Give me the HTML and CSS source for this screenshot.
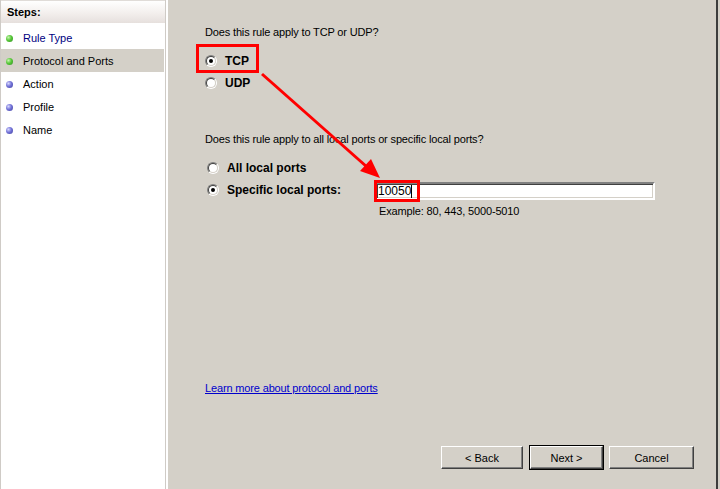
FILE: index.html
```html
<!DOCTYPE html>
<html>
<head>
<meta charset="utf-8">
<link rel="stylesheet" href="styles.css">
</head>
<body>
<div class="window">
  <aside class="steps">
    <div class="steps-head">Steps:</div>
    <ul class="step-list">
      <li class="step done link"><span class="dot green"></span>Rule Type</li>
      <li class="step done current"><span class="dot green"></span>Protocol and Ports</li>
      <li class="step"><span class="dot blue"></span>Action</li>
      <li class="step"><span class="dot blue"></span>Profile</li>
      <li class="step"><span class="dot blue"></span>Name</li>
    </ul>
  </aside>
  <main class="page">
    <p class="question q1">Does this rule apply to TCP or UDP?</p>
    <div class="radios r1">
      <label class="radio-row"><span class="radio checked"></span><b>TCP</b></label>
      <label class="radio-row"><span class="radio"></span><b>UDP</b></label>
    </div>
    <p class="question q2">Does this rule apply to all local ports or specific local ports?</p>
    <div class="radios r2">
      <label class="radio-row"><span class="radio"></span><b>All local ports</b></label>
      <div class="radio-row specific">
        <label class="spec-label"><span class="radio checked"></span><b>Specific local ports:</b></label>
        <div class="field">
          <div class="textbox">10050<span class="caret"></span></div>
          <div class="example">Example: 80, 443, 5000-5010</div>
        </div>
      </div>
    </div>
    <div class="spacer"></div>
    <a class="learn" href="#">Learn more about protocol and ports</a>
    <div class="buttons">
      <button class="btn back">&lt; Back</button>
      <button class="btn next default">Next &gt;</button>
      <button class="btn cancel">Cancel</button>
    </div>
  </main>
  <div class="edge"></div>

  <div class="mark mark-tcp"></div>
  <div class="mark mark-port"></div>
  <svg class="arrow" width="720" height="489" viewBox="0 0 720 489">
    <line x1="262" y1="74" x2="367" y2="167" stroke="#ff0000" stroke-width="3"/>
    <polygon points="380,178 360,171 371,159" fill="#ff0000"/>
  </svg>
</div>
</body>
</html>
```
FILE: styles.css
```css
* { box-sizing: border-box; }
html, body { margin: 0; padding: 0; }
body {
  width: 720px;
  height: 489px;
  overflow: hidden;
  font-family: "Liberation Sans", Arial, sans-serif;
  font-size: 11px;
  color: #000;
  background: #d4d0c8;
}
.window {
  position: relative;
  display: flex;
  width: 720px;
  height: 489px;
}
.steps {
  width: 166px;
  height: 489px;
  background: #fff;
  border-left: 1px solid #cfcbc6;
  border-right: 1px solid #cfcbc6;
  box-shadow: 2px 0 0 #fff;
  margin-right: 2px;
}
.steps-head {
  height: 23px;
  border-top: 1px solid #e0dcd8;
  background: linear-gradient(#ffffff, #f3efed 55%, #e6e0dd);
  font-weight: bold;
  font-size: 11px;
  padding-left: 6px;
  line-height: 22px;
}
.step-list {
  list-style: none;
  margin: 3px 1px 0 0;
  padding: 0;
}
.step {
  height: 23px;
  display: flex;
  align-items: center;
  padding-left: 5px;
}
.step.link { color: #00007f; }
.step.current { background: #d4d0c8; }
.dot {
  width: 7px;
  height: 7px;
  border-radius: 50%;
  margin-right: 10px;
  margin-top: 2px;
}
.dot.green { background: radial-gradient(circle at 35% 35%, #c8f5b0 0, #58c83a 45%, #2d8d1e 100%); }
.dot.blue { background: radial-gradient(circle at 35% 35%, #d8d8ff 0, #7474d8 45%, #3c3c9c 100%); }

.page {
  flex: 1;
  display: flex;
  flex-direction: column;
  padding: 0 22px 20px 37px;
  background: #d4d0c8;
  letter-spacing: -0.15px;
}
.question {
  margin: 0;
  line-height: 14px;
}
.q1 { margin-top: 25px; }
.radios { display: flex; flex-direction: column; }
.r1 { margin-top: 11px; }
.radio-row {
  display: flex;
  align-items: center;
  height: 22px;
}
.radio-row b { font-weight: bold; font-size: 12px; letter-spacing: 0; }
.radio {
  position: relative;
  width: 12px;
  height: 12px;
  border-radius: 50%;
  border: 1px solid;
  border-color: #808080 #ffffff #ffffff #808080;
  margin-right: 8px;
  flex: none;
}
.radio::before {
  content: "";
  position: absolute;
  inset: 0;
  border-radius: 50%;
  border: 1px solid;
  border-color: #404040 #d4d0c8 #d4d0c8 #404040;
  background: #fff;
}
.radio.checked::after {
  content: "";
  position: absolute;
  left: 3px;
  top: 3px;
  width: 4px;
  height: 4px;
  border-radius: 50%;
  background: #000;
}
.q2 { margin-top: 38px; }
.r2 { margin-top: 11px; padding-left: 2px; }
.specific {
  align-items: flex-start;
  height: auto;
}
.spec-label {
  display: flex;
  align-items: center;
  height: 22px;
  width: 168px;
}
.field { display: flex; flex-direction: column; padding-top: 3px; }
.textbox {
  width: 280px;
  height: 18px;
  background: #fff;
  border: 2px solid;
  border-color: #808080 #ffffff #ffffff #808080;
  box-shadow: inset 1px 1px 0 #404040, inset -1px -1px 0 #d4d0c8;
  line-height: 14px;
  padding-left: 1px;
  font-size: 12px;
  letter-spacing: 0;
  display: flex;
  align-items: center;
}
.caret {
  display: inline-block;
  width: 1px;
  height: 13px;
  background: #000;
}
.example {
  margin-top: 4px;
  padding-left: 4px;
  line-height: 14px;
}
.spacer { flex: 1; }
.learn {
  color: #0000cc;
  text-decoration: underline;
  line-height: 14px;
  align-self: flex-start;
  margin-bottom: 51px;
}
.buttons {
  display: flex;
  justify-content: flex-end;
}
.btn {
  font-family: "Liberation Sans", Arial, sans-serif;
  font-size: 11px;
  color: #000;
  height: 23px;
  background: #d4d0c8;
  border: 1px solid;
  border-color: #ffffff #404040 #404040 #ffffff;
  box-shadow: inset -1px -1px 0 #808080;
  padding: 0;
}
.back { width: 82px; margin-right: 7px; }
.next { width: 73px; margin-right: 6px; }
.cancel { width: 85px; }
.btn.default {
  outline: 1px solid #000;
}
.edge {
  width: 4px;
  height: 489px;
  border-left: 2px solid #3c3c3c;
  background: #d4d0c8;
}
.mark {
  position: absolute;
  border: 3px solid #ff0000;
}
.mark-tcp { left: 196px; top: 44px; width: 63px; height: 29px; }
.mark-port { left: 374px; top: 180px; width: 46px; height: 22px; }
.arrow {
  position: absolute;
  left: 0;
  top: 0;
  pointer-events: none;
}
```
